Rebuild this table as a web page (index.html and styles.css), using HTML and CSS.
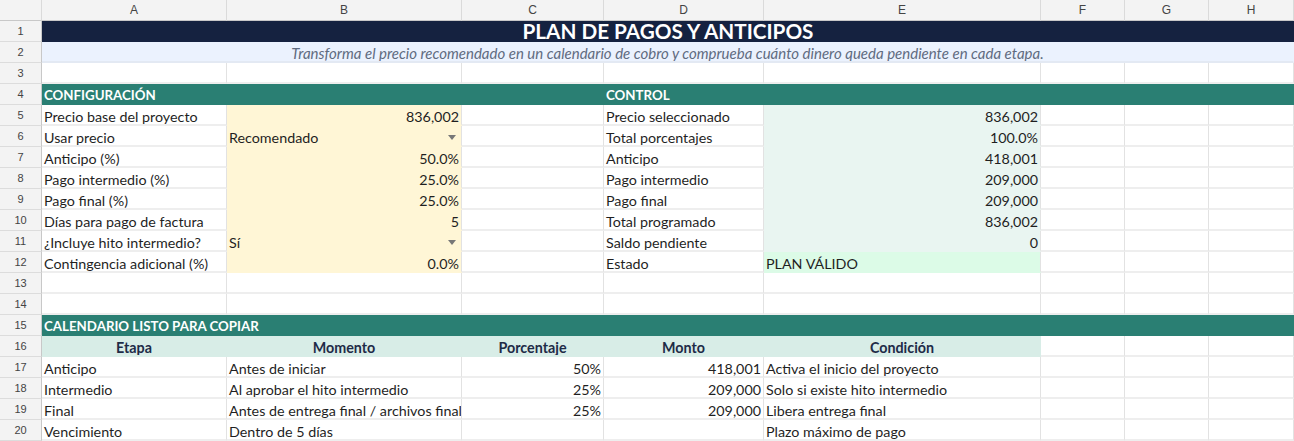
FILE: index.html
```html
<!DOCTYPE html>
<html lang="es">
<head>
<meta charset="utf-8">
<title>Plan de pagos y anticipos</title>
<link rel="stylesheet" href="styles.css">
</head>
<body>
<div class="sheet">
  <div class="hd corner"></div>
  <div class="hd">A</div><div class="hd">B</div><div class="hd">C</div><div class="hd">D</div><div class="hd">E</div><div class="hd">F</div><div class="hd">G</div><div class="hd">H</div>

  <div class="rn">1</div>
  <div class="c title span8">PLAN DE PAGOS Y ANTICIPOS</div>

  <div class="rn">2</div>
  <div class="c subtitle span8">Transforma el precio recomendado en un calendario de cobro y comprueba cuánto dinero queda pendiente en cada etapa.</div>

  <div class="rn">3</div>
  <div class="c"></div><div class="c"></div><div class="c"></div><div class="c"></div><div class="c"></div><div class="c"></div><div class="c"></div><div class="c"></div>

  <div class="rn">4</div>
  <div class="c sec span3">CONFIGURACIÓN</div>
  <div class="c sec span5">CONTROL</div>

  <div class="rn">5</div>
  <div class="c">Precio base del proyecto</div><div class="c in r">836,002</div><div class="c"></div>
  <div class="c">Precio seleccionado</div><div class="c out r">836,002</div><div class="c"></div><div class="c"></div><div class="c"></div>

  <div class="rn">6</div>
  <div class="c">Usar precio</div><div class="c in dd">Recomendado<span class="arrow"></span></div><div class="c"></div>
  <div class="c">Total porcentajes</div><div class="c out r">100.0%</div><div class="c"></div><div class="c"></div><div class="c"></div>

  <div class="rn">7</div>
  <div class="c">Anticipo (%)</div><div class="c in r">50.0%</div><div class="c"></div>
  <div class="c">Anticipo</div><div class="c out r">418,001</div><div class="c"></div><div class="c"></div><div class="c"></div>

  <div class="rn">8</div>
  <div class="c">Pago intermedio (%)</div><div class="c in r">25.0%</div><div class="c"></div>
  <div class="c">Pago intermedio</div><div class="c out r">209,000</div><div class="c"></div><div class="c"></div><div class="c"></div>

  <div class="rn">9</div>
  <div class="c">Pago final (%)</div><div class="c in r">25.0%</div><div class="c"></div>
  <div class="c">Pago final</div><div class="c out r">209,000</div><div class="c"></div><div class="c"></div><div class="c"></div>

  <div class="rn">10</div>
  <div class="c">Días para pago de factura</div><div class="c in r">5</div><div class="c"></div>
  <div class="c">Total programado</div><div class="c out r">836,002</div><div class="c"></div><div class="c"></div><div class="c"></div>

  <div class="rn">11</div>
  <div class="c">¿Incluye hito intermedio?</div><div class="c in dd">Sí<span class="arrow"></span></div><div class="c"></div>
  <div class="c">Saldo pendiente</div><div class="c out r">0</div><div class="c"></div><div class="c"></div><div class="c"></div>

  <div class="rn">12</div>
  <div class="c">Contingencia adicional (%)</div><div class="c in r">0.0%</div><div class="c"></div>
  <div class="c">Estado</div><div class="c ok">PLAN VÁLIDO</div><div class="c"></div><div class="c"></div><div class="c"></div>

  <div class="rn">13</div>
  <div class="c"></div><div class="c"></div><div class="c"></div><div class="c"></div><div class="c"></div><div class="c"></div><div class="c"></div><div class="c"></div>

  <div class="rn">14</div>
  <div class="c"></div><div class="c"></div><div class="c"></div><div class="c"></div><div class="c"></div><div class="c"></div><div class="c"></div><div class="c"></div>

  <div class="rn">15</div>
  <div class="c sec span8">CALENDARIO LISTO PARA COPIAR</div>

  <div class="rn">16</div>
  <div class="c th">Etapa</div><div class="c th">Momento</div><div class="c th">Porcentaje</div><div class="c th">Monto</div><div class="c th">Condición</div>
  <div class="c"></div><div class="c"></div><div class="c"></div>

  <div class="rn">17</div>
  <div class="c">Anticipo</div><div class="c">Antes de iniciar</div><div class="c r">50%</div><div class="c r">418,001</div><div class="c">Activa el inicio del proyecto</div>
  <div class="c"></div><div class="c"></div><div class="c"></div>

  <div class="rn">18</div>
  <div class="c">Intermedio</div><div class="c">Al aprobar el hito intermedio</div><div class="c r">25%</div><div class="c r">209,000</div><div class="c">Solo si existe hito intermedio</div>
  <div class="c"></div><div class="c"></div><div class="c"></div>

  <div class="rn">19</div>
  <div class="c">Final</div><div class="c">Antes de entrega final / archivos finales</div><div class="c r">25%</div><div class="c r">209,000</div><div class="c">Libera entrega final</div>
  <div class="c"></div><div class="c"></div><div class="c"></div>

  <div class="rn">20</div>
  <div class="c">Vencimiento</div><div class="c">Dentro de 5 días</div><div class="c"></div><div class="c"></div><div class="c">Plazo máximo de pago</div>
  <div class="c"></div><div class="c"></div><div class="c"></div>
</div>
</body>
</html>
```

FILE: styles.css
```css
* { box-sizing: border-box; }

html, body {
  margin: 0;
  padding: 0;
  background: #ffffff;
}

body {
  width: 1294px;
  height: 441px;
  overflow: hidden;
  font-family: Lato, "Liberation Sans", sans-serif;
  font-size: 14.3px;
  color: #1f1f1f;
}

.sheet {
  display: grid;
  grid-template-columns: 42px 185px 235px 142px 160px 277px 84px 84px 85px;
  grid-auto-rows: 21px;
}

.hd {
  background: #f3f3f3;
  border-right: 1px solid #dadada;
  border-bottom: 1px solid #c8c8c8;
  font-family: "Liberation Sans", Arial, sans-serif;
  font-size: 12px;
  color: #444;
  display: flex;
  align-items: center;
  justify-content: center;
}

.rn {
  background: #f3f3f3;
  border-right: 1px solid #c8c8c8;
  border-bottom: 1px solid #dcdcdc;
  font-family: "Liberation Sans", Arial, sans-serif;
  font-size: 11px;
  color: #444;
  display: flex;
  align-items: center;
  justify-content: center;
}

.c {
  position: relative;
  border-right: 1px solid #e2e2e2;
  border-bottom: 2px solid #eeeeee;
  padding: 0 2px;
  display: flex;
  align-items: flex-end;
  white-space: nowrap;
  overflow: hidden;
  line-height: 15px;
}

.r { justify-content: flex-end; }

.span3 { grid-column: span 3; }
.span5 { grid-column: span 5; }
.span8 { grid-column: span 8; }

.title {
  background: #152240;
  border: 0;
  color: #ffffff;
  font-weight: 700;
  font-size: 20.7px;
  justify-content: center;
  align-items: center;
  line-height: 21px;
  overflow: visible;
}

.subtitle {
  background: #ebf2fe;
  border-right-color: #ebf2fe;
  border-bottom-color: #e3e9f3;
  color: #5f6b80;
  font-style: italic;
  font-size: 15px;
  justify-content: center;
}

.sec {
  background: #2a7f73;
  border-color: #2a7f73;
  color: #ffffff;
  font-weight: 700;
  font-size: 13.3px;
}

.in {
  background: #fff6d6;
  border-bottom-color: #fff6d6;
}

.out {
  background: #e9f5f1;
  border-bottom-color: #e9f5f1;
}

.ok {
  background: #dcfbe7;
  border-bottom-color: #dcfbe7;
}

.th {
  background: #d8ede7;
  border-color: #d8ede7;
  color: #1e2b47;
  font-weight: 700;
  justify-content: center;
}

.dd { padding-right: 18px; }

.arrow {
  position: absolute;
  right: 5px;
  top: 9px;
  width: 0;
  height: 0;
  border-left: 4px solid transparent;
  border-right: 4px solid transparent;
  border-top: 5px solid #777777;
}
```
